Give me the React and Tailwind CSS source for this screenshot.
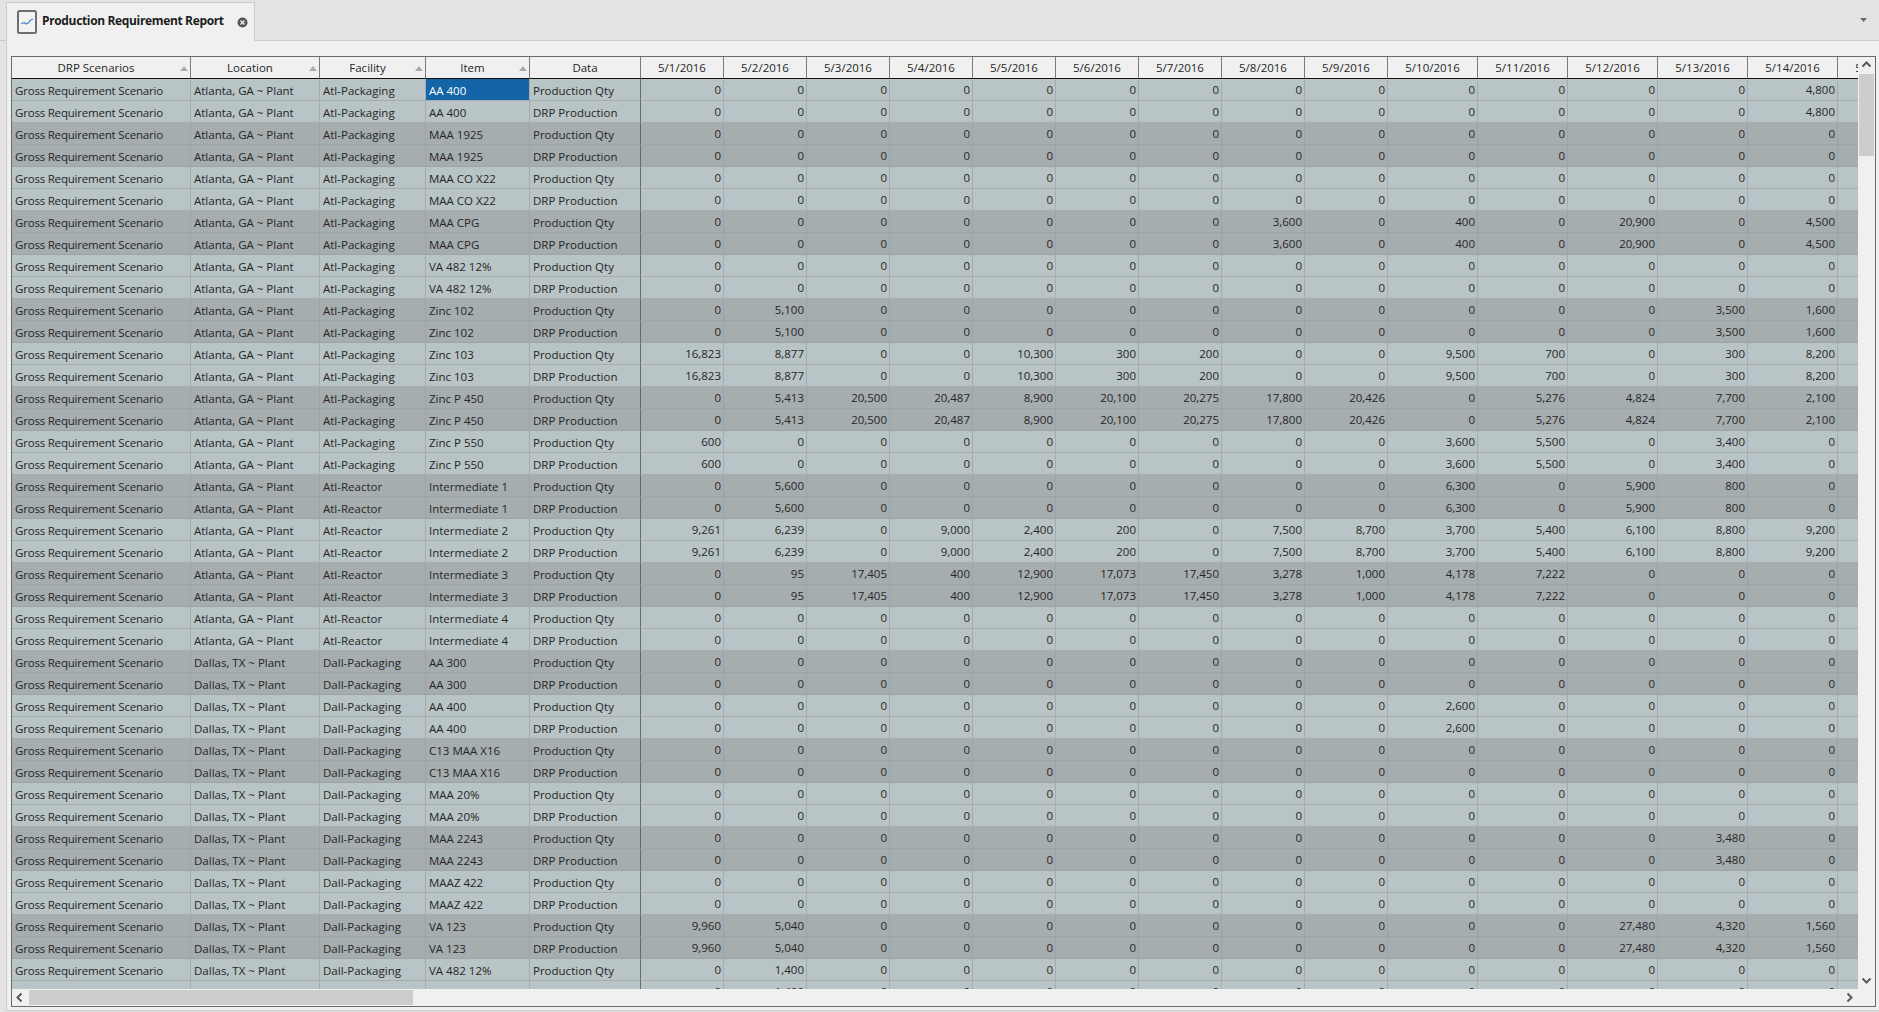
import React from "react";

const Z = [0, 0, 0, 0, 0, 0, 0, 0, 0, 0, 0, 0, 0, 0];
const ATL = "Atlanta, GA ~ Plant";
const DAL = "Dallas, TX ~ Plant";

const items = [
  [ATL, "Atl-Packaging", "AA 400", [0, 0, 0, 0, 0, 0, 0, 0, 0, 0, 0, 0, 0, 4800]],
  [ATL, "Atl-Packaging", "MAA 1925", Z],
  [ATL, "Atl-Packaging", "MAA CO X22", Z],
  [ATL, "Atl-Packaging", "MAA CPG", [0, 0, 0, 0, 0, 0, 0, 3600, 0, 400, 0, 20900, 0, 4500]],
  [ATL, "Atl-Packaging", "VA 482 12%", Z],
  [ATL, "Atl-Packaging", "Zinc 102", [0, 5100, 0, 0, 0, 0, 0, 0, 0, 0, 0, 0, 3500, 1600]],
  [ATL, "Atl-Packaging", "Zinc 103", [16823, 8877, 0, 0, 10300, 300, 200, 0, 0, 9500, 700, 0, 300, 8200]],
  [ATL, "Atl-Packaging", "Zinc P 450", [0, 5413, 20500, 20487, 8900, 20100, 20275, 17800, 20426, 0, 5276, 4824, 7700, 2100]],
  [ATL, "Atl-Packaging", "Zinc P 550", [600, 0, 0, 0, 0, 0, 0, 0, 0, 3600, 5500, 0, 3400, 0]],
  [ATL, "Atl-Reactor", "Intermediate 1", [0, 5600, 0, 0, 0, 0, 0, 0, 0, 6300, 0, 5900, 800, 0]],
  [ATL, "Atl-Reactor", "Intermediate 2", [9261, 6239, 0, 9000, 2400, 200, 0, 7500, 8700, 3700, 5400, 6100, 8800, 9200]],
  [ATL, "Atl-Reactor", "Intermediate 3", [0, 95, 17405, 400, 12900, 17073, 17450, 3278, 1000, 4178, 7222, 0, 0, 0]],
  [ATL, "Atl-Reactor", "Intermediate 4", Z],
  [DAL, "Dall-Packaging", "AA 300", Z],
  [DAL, "Dall-Packaging", "AA 400", [0, 0, 0, 0, 0, 0, 0, 0, 0, 2600, 0, 0, 0, 0]],
  [DAL, "Dall-Packaging", "C13 MAA X16", Z],
  [DAL, "Dall-Packaging", "MAA 20%", Z],
  [DAL, "Dall-Packaging", "MAA 2243", [0, 0, 0, 0, 0, 0, 0, 0, 0, 0, 0, 0, 3480, 0]],
  [DAL, "Dall-Packaging", "MAAZ 422", Z],
  [DAL, "Dall-Packaging", "VA 123", [9960, 5040, 0, 0, 0, 0, 0, 0, 0, 0, 0, 27480, 4320, 1560]],
  [DAL, "Dall-Packaging", "VA 482 12%", [0, 1400, 0, 0, 0, 0, 0, 0, 0, 0, 0, 0, 0, 0]],
];

const textCols = [
  { name: "DRP Scenarios", w: "w-[179px]", sort: true },
  { name: "Location", w: "w-[129px]", sort: true },
  { name: "Facility", w: "w-[106px]", sort: true },
  { name: "Item", w: "w-[104px]", sort: true },
  { name: "Data", w: "w-[111px]", sort: false, frozen: true },
];

const dates = [];
for (let d = 1; d <= 15; d++) dates.push(`5/${d}/2016`);

function fmt(n) {
  return n.toLocaleString("en-US");
}

function SortArrow() {
  return (
    <svg width="8" height="5" viewBox="0 0 8 5" className="mt-px mr-[2px] shrink-0">
      <path d="M4 0 L8 5 L0 5 Z" fill="#a9abad" />
    </svg>
  );
}

function Chevron({ dir }) {
  const paths = {
    up: "M1.5 6.5 L5.5 2.5 L9.5 6.5",
    down: "M1.5 3.5 L5.5 7.5 L9.5 3.5",
    left: "M6.5 1.5 L2.5 5.5 L6.5 9.5",
    right: "M3.5 1.5 L7.5 5.5 L3.5 9.5",
  };
  return (
    <svg width="11" height="11" viewBox="0 0 11 11" className="shrink-0">
      <path d={paths[dir]} fill="none" stroke="#5a5a5a" strokeWidth="2" />
    </svg>
  );
}

function Cell({ dark, children, className }) {
  const line = dark ? "border-[#9da3a6]" : "border-[#a6abae]";
  return (
    <td className={`h-[22px] p-0 border-r border-b overflow-hidden whitespace-nowrap ${line} ${className}`}>
      {children}
    </td>
  );
}

export default function App() {
  const rows = [];
  items.forEach((it, i) => {
    rows.push({ loc: it[0], fac: it[1], item: it[2], data: "Production Qty", vals: it[3], dark: i % 2 === 1 });
    rows.push({ loc: it[0], fac: it[1], item: it[2], data: "DRP Production", vals: it[3], dark: i % 2 === 1 });
  });

  return (
    <div className="h-screen w-screen overflow-hidden flex flex-col bg-[#e3e3e3] text-[#262626] text-[11.5px] font-['Open_Sans',sans-serif]">
      {/* tab strip */}
      <div className="flex h-[41px] shrink-0">
        <div className="w-[6px] border-b border-[#cbcbcb]" />
        <div className="w-[249px] mt-[2px] bg-[#f0f0f0] border border-b-0 border-[#cbcbcb] flex items-start pl-[10px] pt-[7px]">
          <svg width="20" height="24" viewBox="0 0 20 24" className="shrink-0">
            <rect x="1" y="1" width="18" height="22" rx="1.5" fill="#f2f2f2" stroke="#6e6e6e" strokeWidth="2" />
            <path d="M4 14 L7 12.5 L9 14 L12 12.5 L13 10.5 L16 9" fill="none" stroke="#4f86c6" strokeWidth="1.2" />
          </svg>
          <span className="ml-[5px] mt-[3px] leading-[16px] text-[12px] tracking-[-0.35px] font-bold text-[#1c1c1c] whitespace-nowrap">
            Production Requirement Report
          </span>
          <svg width="11" height="11" viewBox="0 0 11 11" className="ml-[13px] mt-[7px] shrink-0">
            <circle cx="5.5" cy="5.5" r="5" fill="#555" />
            <path d="M3.5 3.5 L7.5 7.5 M7.5 3.5 L3.5 7.5" stroke="#eee" strokeWidth="1.4" />
          </svg>
        </div>
        <div className="flex-1 border-b border-[#cbcbcb] flex justify-end pr-[12px] pt-[18px]">
          <svg width="7" height="4" viewBox="0 0 7 4">
            <path d="M0 0 L7 0 L3.5 4 Z" fill="#6a6a6a" />
          </svg>
        </div>
      </div>

      {/* panel */}
      <div className="flex-1 min-h-0 ml-[6px] mb-px bg-[#f0f0f0] border-l border-b border-[#cbcbcb] pl-[4px] pr-[3px] pt-[15px] pb-[3px] flex">
        <div className="flex-1 min-w-0 border border-[#6a6a6a] flex flex-col">
          <div className="flex-1 min-h-0 flex">
            <div className="flex-1 min-w-0 overflow-hidden">
              <table className="table-fixed w-[1916px] border-separate border-spacing-0">
                <colgroup>
                  {textCols.map((c) => (
                    <col key={c.name} className={c.w} />
                  ))}
                  {dates.map((d, i) => (
                    <col key={d} className={i < 9 ? "w-[83px]" : "w-[90px]"} />
                  ))}
                </colgroup>
                <thead>
                  <tr>
                    {textCols.map((c) => (
                      <th key={c.name} className="h-[22px] p-0 pt-px font-normal bg-[#f0f0f0] border-r border-b border-r-[#7a7a7a] border-b-[#111]">
                        <div className="flex items-center">
                          <span className="flex-1 text-center">{c.name}</span>
                          {c.sort && <SortArrow />}
                        </div>
                      </th>
                    ))}
                    {dates.map((d) => (
                      <th key={d} className="h-[22px] p-0 pt-px font-normal text-center bg-[#f0f0f0] border-r border-b border-r-[#7a7a7a] border-b-[#111]">
                        {d}
                      </th>
                    ))}
                  </tr>
                </thead>
                <tbody>
                  {rows.map((r, i) => (
                    <tr key={i} className={r.dark ? "bg-[#a5adaf]" : "bg-[#b8c4c5]"}>
                      <Cell dark={r.dark} className="pl-[3px] pt-[2px] tracking-[-0.2px]">Gross Requirement Scenario</Cell>
                      <Cell dark={r.dark} className="pl-[3px] pt-[2px]">{r.loc}</Cell>
                      <Cell dark={r.dark} className="pl-[3px] pt-[2px]">{r.fac}</Cell>
                      {i === 0 ? (
                        <Cell dark={r.dark} className="pl-[3px] pt-[2px] bg-[#1464a8] text-white">{r.item}</Cell>
                      ) : (
                        <Cell dark={r.dark} className="pl-[3px] pt-[2px]">{r.item}</Cell>
                      )}
                      <td className={`h-[22px] p-0 pl-[3px] pt-[2px] whitespace-nowrap border-b border-r border-r-[#6a6a6a] ${r.dark ? "border-b-[#9da3a6]" : "border-b-[#a6abae]"}`}>
                        {r.data}
                      </td>
                      {r.vals.map((v, j) => (
                        <Cell key={j} dark={r.dark} className="text-right pr-[2px]">{fmt(v)}</Cell>
                      ))}
                      <Cell dark={r.dark} className="" />
                    </tr>
                  ))}
                </tbody>
              </table>
            </div>
            {/* vertical scrollbar */}
            <div className="w-[17px] shrink-0 flex flex-col items-center">
              <div className="h-[17px] flex items-center justify-center"><Chevron dir="up" /></div>
              <div className="flex-1 w-full px-px">
                <div className="h-[82px] bg-[#cdcdcd]" />
              </div>
              <div className="h-[17px] flex items-center justify-center"><Chevron dir="down" /></div>
            </div>
          </div>
          {/* horizontal scrollbar */}
          <div className="h-[17px] shrink-0 flex items-center">
            <div className="w-[17px] flex justify-center"><Chevron dir="left" /></div>
            <div className="flex-1 h-full py-px">
              <div className="w-[384px] h-full bg-[#cdcdcd]" />
            </div>
            <div className="w-[17px] mr-[17px] flex justify-center"><Chevron dir="right" /></div>
          </div>
        </div>
      </div>
    </div>
  );
}
